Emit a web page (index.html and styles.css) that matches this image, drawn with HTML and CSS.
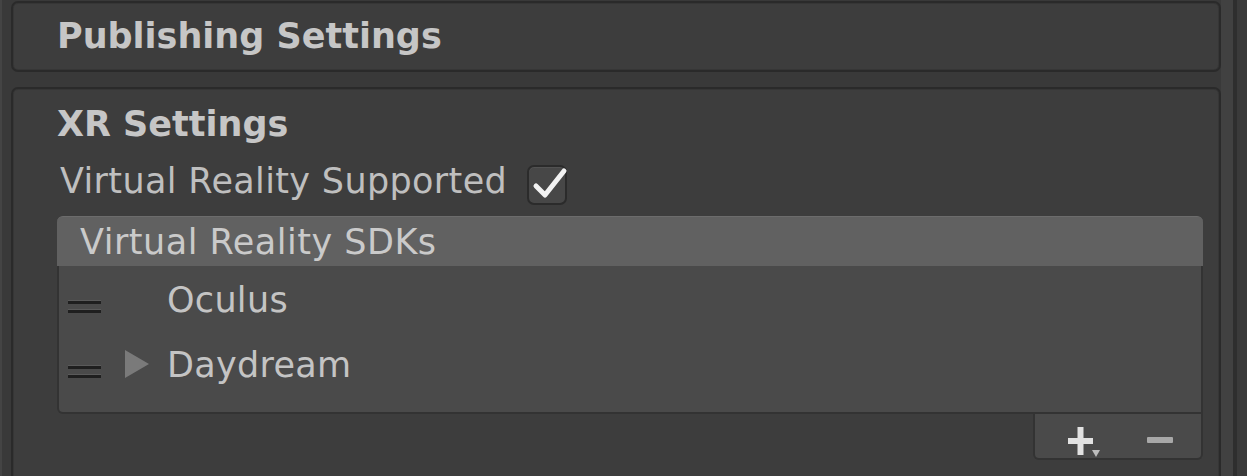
FILE: index.html
```html
<!DOCTYPE html>
<html>
<head>
<meta charset="utf-8">
<link rel="stylesheet" href="styles.css">
</head>
<body>
<div class="window">
  <div class="gutter"></div>
  <div class="main">
    <section class="panel panel-pub">
      <h2 class="title">Publishing Settings</h2>
    </section>
    <section class="panel panel-xr">
      <h2 class="title">XR Settings</h2>
      <div class="field">
        <span class="label">Virtual Reality Supported</span>
        <span class="checkbox">
          <svg class="check" width="40" height="40" viewBox="0 0 40 40"><polyline points="9,21 18,30 37,6" fill="none" stroke="#f2f2f2" stroke-width="5" stroke-linecap="round" stroke-linejoin="round"/></svg>
        </span>
      </div>
      <div class="list">
        <div class="list-head">Virtual Reality SDKs</div>
        <div class="list-body">
          <div class="item">
            <span class="handle"><i></i><i></i></span>
            <span class="fold"></span>
            <span class="item-label">Oculus</span>
          </div>
          <div class="item">
            <span class="handle"><i></i><i></i></span>
            <span class="fold"><span class="tri"></span></span>
            <span class="item-label">Daydream</span>
          </div>
        </div>
        <div class="list-foot">
          <svg class="plus" width="33" height="32" viewBox="0 0 33 32">
            <rect x="0" y="11" width="25" height="6" fill="#e2e2e2"/>
            <rect x="9.5" y="0" width="6" height="28" fill="#e2e2e2"/>
            <polygon points="24,23 32,23 28,30" fill="#bdbdbd"/>
          </svg>
          <span class="minus"></span>
        </div>
      </div>
    </section>
  </div>
  <div class="scroll"><div class="track"></div><div class="sep"></div><div class="rest"></div></div>
</div>
</body>
</html>
```
FILE: styles.css
```css
html, body {
  margin: 0;
  padding: 0;
}
body {
  background: #393939;
  font-family: "DejaVu Sans", Verdana, sans-serif;
  font-size: 35px;
  color: #c2c2c2;
  height: 476px;
  overflow: hidden;
}
.window {
  display: flex;
  height: 476px;
}
.gutter {
  width: 11px;
  flex: none;
  box-sizing: border-box;
  border-left: 2px solid #444444;
}
.main {
  flex: 1;
  display: flex;
  flex-direction: column;
  min-width: 0;
}
.scroll {
  width: 26px;
  flex: none;
  display: flex;
}
.track { width: 12px; background: #414141; }
.sep { width: 4px; background: #2e2e2e; }
.rest { flex: 1; background: #3a3a3a; }

.panel {
  background: #3d3d3d;
  border: 2px solid #2a2a2a;
  border-radius: 7px;
  box-shadow: inset 0 0 0 1px #363636;
  padding-left: 44px;
  padding-right: 16px;
}
.panel-pub {
  margin-top: 1px;
  padding-top: 13px;
  padding-bottom: 13px;
}
.panel-xr {
  margin-top: 15px;
  padding-top: 15px;
  height: 600px;
  flex: none;
}
.title {
  margin: 0;
  font-size: 35px;
  font-weight: bold;
  line-height: 41px;
  color: #c6c6c6;
}
.field {
  display: flex;
  align-items: flex-start;
  margin-top: 16px;
  height: 41px;
}
.label {
  margin-left: 3px;
  line-height: 41px;
  letter-spacing: 0.35px;
  color: #bfbfbf;
}
.checkbox {
  margin-left: 20px;
  margin-top: 4px;
  width: 40px;
  height: 40px;
  flex: none;
  box-sizing: border-box;
  border: 2px solid #2b2b2b;
  border-radius: 7px;
  background: #474747;
  box-shadow: inset 0 1px 0 #525252;
  position: relative;
}
.check {
  position: absolute;
  left: -2px;
  top: -2px;
  overflow: visible;
}
.list {
  margin-top: 14px;
  display: flex;
  flex-direction: column;
}
.list-head {
  height: 50px;
  line-height: 50px;
  box-sizing: border-box;
  padding-left: 23px;
  background: #616161;
  border-radius: 6px 6px 0 0;
  border-top: 1px solid #6c6c6c;
  letter-spacing: 0.5px;
  color: #cacaca;
}
.list-body {
  height: 148px;
  box-sizing: border-box;
  padding-top: 2px;
  background: #4a4a4a;
  border: 2px solid #333333;
  border-top: none;
  border-radius: 0 0 0 6px;
}
.item {
  display: flex;
  align-items: flex-start;
  height: 65px;
}
.handle {
  margin-left: 9px;
  margin-top: 33px;
  width: 33px;
  display: flex;
  flex-direction: column;
  gap: 6px;
}
.handle i {
  display: block;
  height: 3px;
  background: #1f1f1f;
  box-shadow: 0 -1px 0 #5a5a5a;
}
.fold {
  margin-left: 24px;
  width: 24px;
  height: 65px;
}
.tri {
  display: block;
  margin-top: 17px;
  width: 0;
  height: 0;
  border-left: 24px solid #7a7a7a;
  border-top: 14.5px solid transparent;
  border-bottom: 14.5px solid transparent;
}
.item-label {
  margin-left: 18px;
  line-height: 65px;
  letter-spacing: 0.3px;
  color: #c4c4c4;
}
.list-foot {
  align-self: flex-end;
  width: 170px;
  height: 46px;
  box-sizing: border-box;
  display: flex;
  align-items: flex-start;
  padding-left: 33px;
  padding-top: 13px;
  background: #4a4a4a;
  border: 2px solid #333333;
  border-top: none;
  border-radius: 0 0 6px 6px;
}
.plus {
  flex: none;
}
.minus {
  margin-left: 46px;
  margin-top: 10px;
  width: 26px;
  height: 6px;
  border-radius: 1px;
  background: #a8a8a8;
}
```
